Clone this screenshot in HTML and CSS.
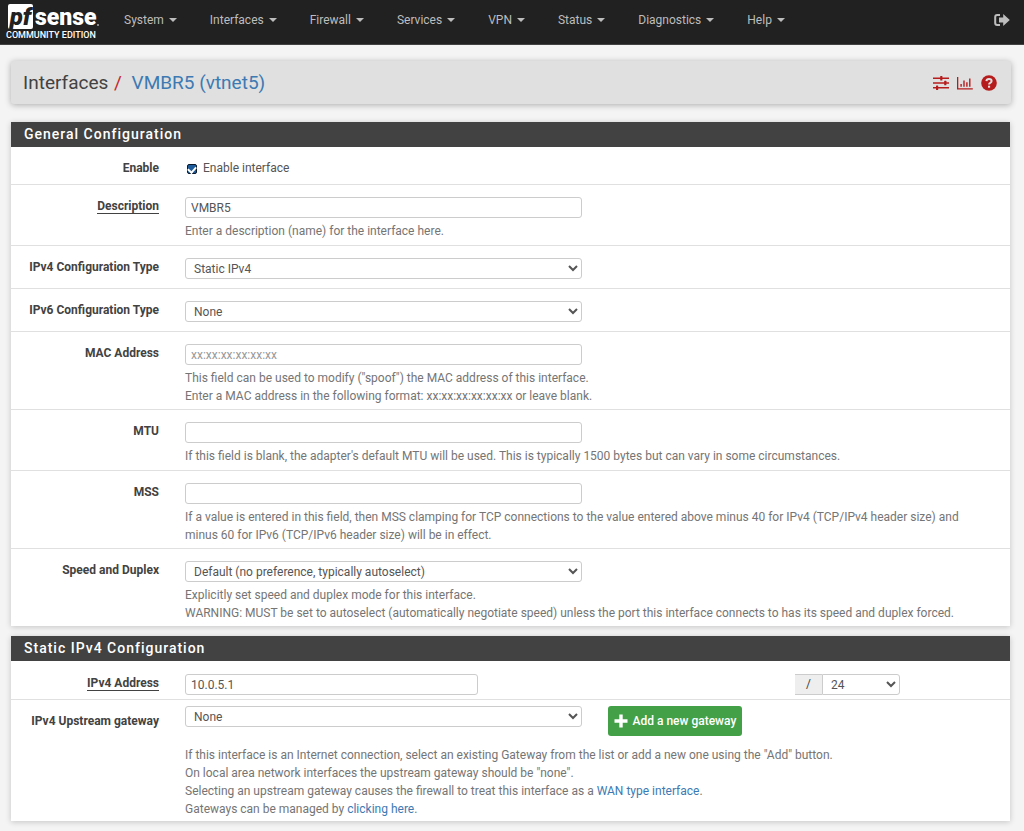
FILE: index.html
```html
<!DOCTYPE html>
<html lang="en">
<head>
<meta charset="utf-8">
<meta name="viewport" content="width=device-width, initial-scale=1">
<title>pfSense - Interfaces: VMBR5 (vtnet5)</title>
<link rel="stylesheet" href="styles.css">
</head>
<body>
<header class="topbar">
  <a class="brand" href="#" aria-label="pfSense Community Edition">
    <span class="brand-name"><span class="brand-box">pf</span><span class="brand-rest">sense</span><span class="brand-dot"></span></span>
    <span class="brand-edition">COMMUNITY EDITION</span>
  </a>
  <nav class="menu">
    <a href="#">System<span class="caret"></span></a>
    <a href="#">Interfaces<span class="caret"></span></a>
    <a href="#">Firewall<span class="caret"></span></a>
    <a href="#">Services<span class="caret"></span></a>
    <a href="#">VPN<span class="caret"></span></a>
    <a href="#">Status<span class="caret"></span></a>
    <a href="#">Diagnostics<span class="caret"></span></a>
    <a href="#">Help<span class="caret"></span></a>
  </nav>
  <a class="logout" href="#" aria-label="Log out">
    <svg width="16" height="14" viewBox="0 0 16 14"><path d="M6 2H3.2Q1.2 2 1.2 4V10Q1.2 12 3.2 12H6" fill="none" stroke="currentColor" stroke-width="2"/><path d="M5 4.6H9.2V1L15.8 7 9.2 13V9.4H5Z" fill="currentColor"/></svg>
  </a>
</header>

<main class="page">
  <div class="titlebar">
    <h1 class="title">Interfaces <span class="slash">/</span> <a href="#">VMBR5 (vtnet5)</a></h1>
    <div class="tools">
      <a href="#" aria-label="Related settings"><svg width="16" height="14" viewBox="0 0 16 14" fill="currentColor"><path d="M0 1.5H16V3H0ZM0 6.3H16V7.8H0ZM0 11.1H16V12.6H0Z"/><rect x="7.2" y="0" width="2.2" height="4.4" rx=".5"/><rect x="11.2" y="4.8" width="2.2" height="4.4" rx=".5"/><rect x="3" y="9.6" width="2.2" height="4.4" rx=".5"/></svg></a>
      <a href="#" aria-label="Status graph"><svg width="16" height="14" viewBox="0 0 16 14" fill="currentColor"><path d="M0 1H1.3V12.2H15.8V13.5H0ZM3.4 8H4.8V10.8H3.4ZM6.3 4.6H7.7V10.8H6.3ZM9.2 6.2H10.6V10.8H9.2ZM12.1 2.4H13.5V10.8H12.1Z"/></svg></a>
      <a href="#" aria-label="Help"><svg width="16" height="16" viewBox="0 0 16 16"><circle cx="8" cy="8" r="7.8" fill="currentColor"/><path d="M5.4 6.1Q5.6 3.9 8 3.9 10.6 3.9 10.6 6.1 10.6 7.2 9.3 7.9 8.1 8.5 8.1 9.6" fill="none" stroke="#e0e0e0" stroke-width="2"/><rect x="7" y="10.7" width="2.1" height="2" fill="#e0e0e0"/></svg></a>
    </div>
  </div>

  <section class="panel">
    <h2 class="panel-head">General Configuration</h2>
    <div class="row row-check">
      <span class="label">Enable</span>
      <div class="field"><label class="check"><input type="checkbox" checked> Enable interface</label></div>
    </div>
    <div class="row row-help">
      <label class="label" for="descr"><span class="required">Description</span></label>
      <div class="field"><input class="control" id="descr" type="text" value="VMBR5">
        <p class="help">Enter a description (name) for the interface here.</p></div>
    </div>
    <div class="row">
      <label class="label" for="type4">IPv4 Configuration Type</label>
      <div class="field"><select class="control" id="type4"><option>Static IPv4</option></select></div>
    </div>
    <div class="row">
      <label class="label" for="type6">IPv6 Configuration Type</label>
      <div class="field"><select class="control" id="type6"><option>None</option></select></div>
    </div>
    <div class="row row-help">
      <label class="label" for="mac">MAC Address</label>
      <div class="field"><input class="control" id="mac" type="text" placeholder="xx:xx:xx:xx:xx:xx">
        <p class="help">This field can be used to modify ("spoof") the MAC address of this interface.<br>Enter a MAC address in the following format: xx:xx:xx:xx:xx:xx or leave blank.</p></div>
    </div>
    <div class="row row-help">
      <label class="label" for="mtu">MTU</label>
      <div class="field"><input class="control" id="mtu" type="text">
        <p class="help">If this field is blank, the adapter's default MTU will be used. This is typically 1500 bytes but can vary in some circumstances.</p></div>
    </div>
    <div class="row row-help">
      <label class="label" for="mss">MSS</label>
      <div class="field"><input class="control" id="mss" type="text">
        <p class="help">If a value is entered in this field, then MSS clamping for TCP connections to the value entered above minus 40 for IPv4 (TCP/IPv4 header size) and minus 60 for IPv6 (TCP/IPv6 header size) will be in effect.</p></div>
    </div>
    <div class="row row-help">
      <label class="label" for="media">Speed and Duplex</label>
      <div class="field"><select class="control" id="media"><option>Default (no preference, typically autoselect)</option></select>
        <p class="help">Explicitly set speed and duplex mode for this interface.<br>WARNING: MUST be set to autoselect (automatically negotiate speed) unless the port this interface connects to has its speed and duplex forced.</p></div>
    </div>
  </section>

  <section class="panel">
    <h2 class="panel-head">Static IPv4 Configuration</h2>
    <div class="row row-address">
      <label class="label" for="ip"><span class="required">IPv4 Address</span></label>
      <div class="field address"><input class="control" id="ip" type="text" value="10.0.5.1">
        <div class="mask"><span class="addon">/</span><select class="control" aria-label="Subnet mask"><option>24</option></select></div></div>
    </div>
    <div class="row row-gateway">
      <label class="label" for="gw">IPv4 Upstream gateway</label>
      <div class="field">
        <div class="gateway"><select class="control" id="gw"><option>None</option></select>
          <button class="add" type="button"><svg width="14" height="14" viewBox="0 0 14 14"><path d="M5.3 0.5H8.7V5.3H13.5V8.7H8.7V13.5H5.3V8.7H0.5V5.3H5.3Z" fill="currentColor"/></svg>Add a new gateway</button></div>
        <p class="help">If this interface is an Internet connection, select an existing Gateway from the list or add a new one using the "Add" button.<br>On local area network interfaces the upstream gateway should be "none".<br>Selecting an upstream gateway causes the firewall to treat this interface as a <a href="#">WAN type interface</a>.<br>Gateways can be managed by <a href="#">clicking here</a>.</p>
      </div>
    </div>
  </section>
</main>
</body>
</html>
```
FILE: styles.css
```css
* { box-sizing: border-box; }

body {
  margin: 0;
  background: #f4f4f4;
  color: #424242;
  font: 12px/18px Roboto, "Liberation Sans", sans-serif;
}

a { color: #3d7ab3; text-decoration: none; }
svg { display: block; }

.topbar {
  display: flex;
  align-items: flex-start;
  height: 45px;
  padding: 0 14px 0 6px;
  background: #212121;
  border-bottom: 1px solid #424242;
}

.brand { width: 102px; padding-top: 4px; color: #fff; }
.brand-name { display: flex; align-items: flex-start; height: 25px; padding-left: 2px; }
.brand-box {
  width: 25px;
  height: 25px;
  background: #fff;
  color: #212121;
  font: italic 900 24px/26px Roboto, sans-serif;
  text-align: center;
  border-radius: 2px;
}
.brand-rest { padding-left: 2px; font: 900 23px/28px Roboto, sans-serif; }
.brand-dot { width: 2px; height: 2px; margin-top: 20px; border-radius: 50%; background: #aaa; }
.brand-edition { display: block; font-size: 9px; font-weight: 500; line-height: 12px; white-space: nowrap; }

.menu { display: flex; flex: 1; }
.menu a {
  display: flex;
  align-items: center;
  padding: 11px 17px 0 16px;
  color: #bdbdbd;
}
.caret {
  margin-left: 5px;
  border: 4px solid transparent;
  border-top-color: currentColor;
  border-bottom: 0;
}
.logout { padding-top: 13px; color: #bdbdbd; }

.page { padding: 16px 13px 10px 11px; }

.titlebar {
  display: flex;
  align-items: center;
  justify-content: space-between;
  min-height: 43px;
  margin-bottom: 18px;
  padding: 0 14px 0 12px;
  background: #e0e0e0;
  border-radius: 3px;
  box-shadow: 0 1px 6px rgba(0, 0, 0, .3);
}
.title { margin: 0; font-size: 19px; font-weight: 400; line-height: 24px; }
.slash { margin: 0 5px 0 1px; color: #c62828; }
.tools { display: flex; align-items: center; gap: 8px; }
.tools a { color: #b71c1c; }

.panel {
  margin: 0 1px 10px 0;
  background: #fff;
  box-shadow: 0 1px 6px rgba(0, 0, 0, .2);
}
.panel-head {
  margin: 0;
  padding: 3px 13px 4px;
  background: #424242;
  color: #fff;
  font-size: 14px;
  font-weight: 500;
  line-height: 18px;
  letter-spacing: 1px;
}

.row {
  display: flex;
  gap: 26px;
  min-height: 43px;
  padding: 12px 10px 4px 0;
  border-bottom: 1px solid #e0e0e0;
}
.row:last-child { border-bottom: 0; }
.row-check { min-height: 38px; }
.row-help { min-height: 61px; }
.row-address { min-height: 39px; padding-top: 13px; }
.row-gateway { padding: 6px 10px 3px 0; }

.label { flex: none; width: 148px; font-weight: 700; text-align: right; }
.row-gateway .label { padding-top: 6px; }
.required { display: inline-block; border-bottom: 1px solid #424242; line-height: 14px; }
.field { flex: 1; min-width: 0; }

.check { display: flex; align-items: center; gap: 6px; color: #555; }
.check input {
  display: grid;
  place-items: center;
  appearance: none;
  width: 10px;
  height: 10px;
  margin: 1px 0 0 2px;
  border: 1px solid #0a1a2c;
  border-radius: 2px;
  background: #fff;
}
.check input:checked { background: #1d5b9b; }
.check input:checked::after {
  content: "";
  width: 4px;
  height: 6px;
  border: solid #fff;
  border-width: 0 2px 2px 0;
  transform: rotate(42deg);
}

.control {
  display: block;
  width: calc(50% - 11px);
  height: 21px;
  padding: 0 5px;
  background-color: #fff;
  border: 1px solid #ccc;
  border-radius: 3px;
  color: #555;
  font: inherit;
  line-height: 19px;
}
select.control { padding: 0 0 0 4px; }
.control::placeholder { color: #999; }

.help { margin: 4px 0 0; padding-right: 20px; color: #757575; }

.address { display: flex; justify-content: space-between; padding-right: 100px; }
.address > .control { width: 41%; }
.mask { display: flex; width: 105px; }
.mask .control { flex: 1; border-radius: 0 3px 3px 0; }
.addon {
  width: 27px;
  border: 1px solid #ccc;
  border-width: 1px 0;
  background: #eee;
  line-height: 19px;
  text-align: center;
}

.gateway { display: flex; align-items: flex-start; gap: 26px; }
.add {
  display: flex;
  align-items: center;
  gap: 5px;
  height: 30px;
  padding: 0 6px;
  background: #43a047;
  border: 0;
  border-radius: 3px;
  color: #fff;
  font: 500 12px/18px Roboto, "Liberation Sans", sans-serif;
  white-space: nowrap;
}
.row-gateway .help { margin-top: 10px; }
```
